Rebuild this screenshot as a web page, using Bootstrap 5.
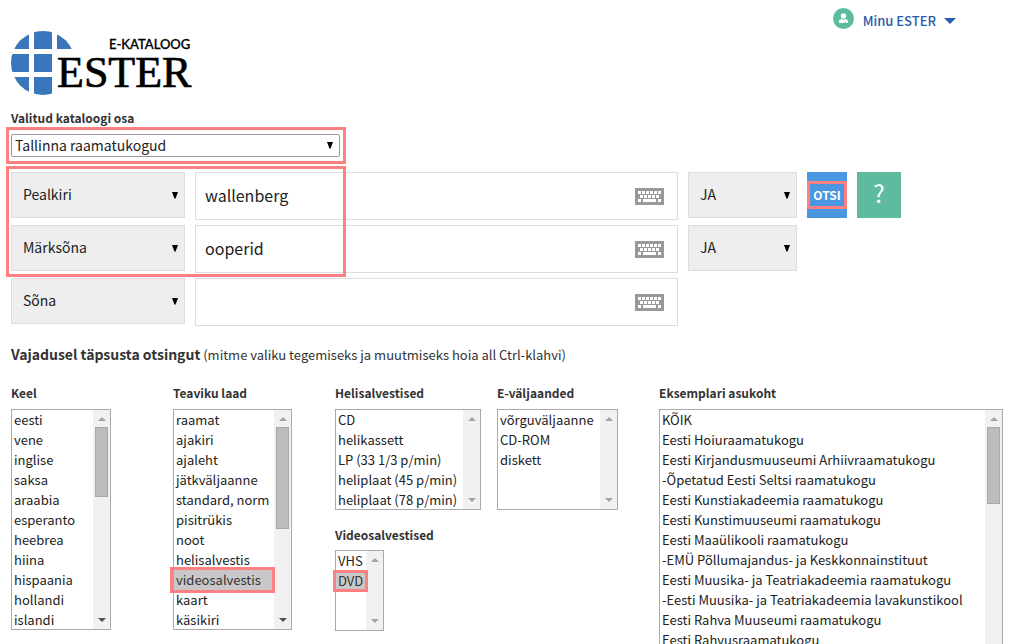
<!DOCTYPE html>
<html lang="et">
<head>
<meta charset="utf-8">
<meta name="viewport" content="width=device-width, initial-scale=1">
<title>E-kataloog ESTER</title>
<link href="https://cdn.jsdelivr.net/npm/bootstrap@5.3.0/dist/css/bootstrap.min.css" rel="stylesheet">
<style>
  body { font-family: "Noto Sans CJK SC", "Open Sans", sans-serif; font-size: 13px; line-height: 20px; color: #333; background: #fff; }
  .page { padding: 0 8px 0 11px; }
  .topbar { height: 31px; padding: 8px 47px 0 0; gap: 9px; }
  .topbar a { color: #2a5caa; font-weight: 500; line-height: 26px; gap: 8px; height: 26px; }
  .field-label { display: block; font-size: 12px; font-weight: 700; line-height: 20px; margin-bottom: 6px; white-space: nowrap; }
  .label-second { margin: 15px 0 5px; }
  .logo { margin-bottom: 12px; }
  .catalog { width: 329px; }
  .drop { appearance: none; border: 1px solid #ddd; border-radius: 0; color: #222; font-size: 14px; line-height: 20px;
    background: #eee url("data:image/svg+xml,%3Csvg xmlns='http://www.w3.org/2000/svg' width='6' height='7'%3E%3Cpath d='M0 0h6L3.600 6.500H2.400z'/%3E%3C/svg%3E") no-repeat right 6px center; }
  .drop-tall { height: 46px; width: 100%; padding: 0 20px 2px 11px; }
  .drop-slim { height: 23px; width: 100%; padding: 0 20px 1px 3px; border-color: #999; border-radius: 2px; background-color: #fff; display: block; }
  .row-start { grid-column: 1; }
  .search { display: grid; grid-template-columns: 174px minmax(0, 1fr) 109px 40px 44px; gap: 5px 10px; margin: 15px 102px 19px 0; align-items: start; }
  .term { height: 48px; border: 1px solid #ddd; padding-right: 13px; grid-column: 2; }
  .term input { border: 0; outline: 0; background: none; font-size: 16px; line-height: 24px; color: #222; padding: 0 9px 2px; min-width: 0; }
  .go { grid-column: 4; height: 46px; background: #4a96e0; color: #fff; font-size: 12px; font-weight: 700; border: 0; }
  .help { height: 46px; background: #5ebba0; color: #fff; font-size: 24px; line-height: 42px; font-weight: 400; border: 0; }
  .mark-box { position: absolute; border: 3px solid #ff8080; pointer-events: none; }
  .mark-catalog { inset: -7px -6px -7px -5px; }
  .mark-terms { left: -5px; top: -6px; width: 340px; height: 111px; }
  .mark-go { inset: 9px 0; }
  .mark-video { left: -4px; top: 157px; width: 105px; height: 26px; }
  .mark-dvd { left: -3px; top: 19px; width: 35px; height: 22px; }
  .filters { display: grid; grid-template-columns: repeat(4, 162px) minmax(0, 1fr); margin-top: 18px; }
  .listbox { border: 1px solid #aaa; background: #fff; height: 101px; }
  .listbox select { border: 0; outline: 0; padding: 0; background: none; color: #222; font-size: 13px; min-width: 0; scrollbar-width: none; overflow: hidden; height: 100%; }
  .listbox select::-webkit-scrollbar { display: none; }
  .listbox option { padding: 0 2px; height: 20px; min-height: 20px; line-height: 20px; }
  .listbox option:checked { background: #c8c8c8 linear-gradient(#c8c8c8, #c8c8c8); color: #333; }
  .lead-in strong { font-size: 14px; line-height: 16px; }
  .rail { width: 17px; flex: none; background: #f1f1f1; padding: 7px 2px; color: #a3a3a3; }
  .rail svg { display: block; margin: 0 auto; }
  .thumb { border: 1px solid #a8a8a8; background: #bcbcbc; margin-top: 6px; width: 13px; }
  .rail .on { color: #505050; }
  .tall { height: 221px; }
  .w-lang { width: 100px; } .w-kind { width: 119px; } .w-audio { width: 146px; } .w-online { width: 121px; } .w-video { width: 49px; height: 81px; }
  .place { height: 301px; }
</style>
</head>
<body class="vh-100 overflow-hidden">
<svg width="0" height="0" class="position-absolute" aria-hidden="true">
  <symbol id="up" viewBox="0 0 8 4"><path d="M0 4h8L4 0z" fill="currentColor"/></symbol>
  <symbol id="down" viewBox="0 0 8 4"><path d="M0 0h8L4 4z" fill="currentColor"/></symbol>
  <symbol id="keys" viewBox="0 0 29 17">
    <path d="M0 0h29v17H0z" fill="#999"/>
    <path d="M3 3h3v3H3zM7 3h3v3H7zM11 3h3v3h-3zM15 3h3v3h-3zM19 3h3v3h-3zM23 3h3v3h-3zM5 7h3v3H5zM9 7h3v3H9zM13 7h3v3h-3zM17 7h3v3h-3zM21 7h3v3h-3zM3 11h3v3H3zM8 11h13v3H8zM23 11h3v3h-3z" fill="#fff"/>
  </symbol>
</svg>
<div class="page">
  <nav class="topbar d-flex justify-content-end">
    <svg width="21" height="21" viewBox="0 0 21 21" aria-hidden="true">
      <circle cx="10.500" cy="10.500" r="10.500" fill="#5ebba0"/>
      <circle cx="10.500" cy="8" r="2.700" fill="#fff"/>
      <path d="M6 15v-1.500q0-2 2.500-2.400 2 1.400 4 0 2.500.4 2.500 2.400V15h-2v-1h-1v1z" fill="#fff"/>
    </svg>
    <a href="#" class="d-flex align-items-center text-decoration-none">Minu ESTER
      <svg width="12" height="6" viewBox="0 0 12 6" aria-hidden="true"><path d="M0 0h12L6 6z" fill="currentColor"/></svg>
    </a>
  </nav>

  <svg class="logo d-block" width="182" height="65" viewBox="0 0 182 65" role="img" aria-label="E-kataloog ESTER">
    <clipPath id="disc"><circle cx="32" cy="32" r="32"/></clipPath>
    <g clip-path="url(#disc)" fill="#3a76bb">
      <path d="M0 0h18v18H0zM23 0h18v18H23zM46 0h18v18H46zM0 23h18v18H0zM23 23h18v18H23zM0 46h18v18H0zM23 46h18v18H23z"/>
    </g>
    <text x="98" y="18" font-family="Lato" font-size="13" font-weight="500" fill="#000" stroke="#000" stroke-width=".3">E-KATALOOG</text>
    <text x="46" y="56" font-family="Liberation Serif" font-size="44" fill="#000" stroke="#000" stroke-width=".7">ESTER</text>
  </svg>

  <form>
    <div class="catalog">
      <label class="field-label" for="osa">Valitud kataloogi osa</label>
      <div class="position-relative">
        <select id="osa" class="drop drop-slim"><option>Tallinna raamatukogud</option></select>
        <span class="mark-box mark-catalog"></span>
      </div>
    </div>

    <div class="search position-relative">
      <select class="drop drop-tall row-start" aria-label="Otsinguväli 1"><option>Pealkiri</option></select>
      <div class="term d-flex align-items-center">
        <input class="flex-grow-1" type="text" value="wallenberg" aria-label="Otsisõna 1">
        <svg width="29" height="17" aria-hidden="true"><use href="#keys"/></svg>
      </div>
      <select class="drop drop-tall" aria-label="Tehe 1"><option>JA</option></select>
      <button type="submit" class="go position-relative p-0">OTSI<span class="mark-box mark-go"></span></button>
      <button type="button" class="help p-0 pb-1">?</button>

      <select class="drop drop-tall row-start" aria-label="Otsinguväli 2"><option>Märksõna</option></select>
      <div class="term d-flex align-items-center">
        <input class="flex-grow-1" type="text" value="ooperid" aria-label="Otsisõna 2">
        <svg width="29" height="17" aria-hidden="true"><use href="#keys"/></svg>
      </div>
      <select class="drop drop-tall" aria-label="Tehe 2"><option>JA</option></select>

      <select class="drop drop-tall row-start" aria-label="Otsinguväli 3"><option>Sõna</option></select>
      <div class="term d-flex align-items-center">
        <input class="flex-grow-1" type="text" aria-label="Otsisõna 3">
        <svg width="29" height="17" aria-hidden="true"><use href="#keys"/></svg>
      </div>
      <span class="mark-box mark-terms"></span>
    </div>

    <p class="lead-in m-0"><strong>Vajadusel täpsusta otsingut</strong> (mitme valiku tegemiseks ja muutmiseks hoia all Ctrl-klahvi)</p>

    <div class="filters">
      <div>
        <label class="field-label" for="keel">Keel</label>
        <div class="listbox tall w-lang d-flex">
          <select id="keel" class="flex-grow-1" multiple size="11">
            <option>eesti</option><option>vene</option><option>inglise</option><option>saksa</option><option>araabia</option><option>esperanto</option><option>heebrea</option><option>hiina</option><option>hispaania</option><option>hollandi</option><option>islandi</option>
          </select>
          <div class="rail d-flex flex-column"><svg width="8" height="4"><use href="#up"/></svg><div class="thumb" style="height:70px"></div><svg class="on mt-auto mb-0" width="8" height="4"><use href="#down"/></svg></div>
        </div>
      </div>
      <div>
        <label class="field-label" for="laad">Teaviku laad</label>
        <div class="listbox tall w-kind d-flex position-relative">
          <select id="laad" class="flex-grow-1" multiple size="11">
            <option>raamat</option><option>ajakiri</option><option>ajaleht</option><option>jätkväljaanne</option><option>standard, norm</option><option>pisitrükis</option><option>noot</option><option>helisalvestis</option><option selected>videosalvestis</option><option>kaart</option><option>käsikiri</option>
          </select>
          <div class="rail d-flex flex-column"><svg width="8" height="4"><use href="#up"/></svg><div class="thumb" style="height:102px"></div><svg class="on mt-auto mb-0" width="8" height="4"><use href="#down"/></svg></div>
          <span class="mark-box mark-video"></span>
        </div>
      </div>
      <div>
        <label class="field-label" for="heli">Helisalvestised</label>
        <div class="listbox w-audio d-flex">
          <select id="heli" class="flex-grow-1" multiple size="5">
            <option>CD</option><option>helikassett</option><option>LP (33 1/3 p/min)</option><option>heliplaat (45 p/min)</option><option>heliplaat (78 p/min)</option>
          </select>
          <div class="rail d-flex flex-column justify-content-between"><svg width="8" height="4"><use href="#up"/></svg><svg width="8" height="4"><use href="#down"/></svg></div>
        </div>
        <label class="field-label label-second" for="video">Videosalvestised</label>
        <div class="listbox w-video d-flex position-relative">
          <select id="video" class="flex-grow-1" multiple size="4">
            <option>VHS</option><option selected>DVD</option>
          </select>
          <div class="rail d-flex flex-column justify-content-between"><svg width="8" height="4"><use href="#up"/></svg><svg width="8" height="4"><use href="#down"/></svg></div>
          <span class="mark-box mark-dvd"></span>
        </div>
      </div>
      <div>
        <label class="field-label" for="evalja">E-väljaanded</label>
        <div class="listbox w-online d-flex">
          <select id="evalja" class="flex-grow-1" multiple size="5">
            <option>võrguväljaanne</option><option>CD-ROM</option><option>diskett</option>
          </select>
          <div class="rail d-flex flex-column justify-content-between"><svg width="8" height="4"><use href="#up"/></svg><svg width="8" height="4"><use href="#down"/></svg></div>
        </div>
      </div>
      <div>
        <label class="field-label" for="asukoht">Eksemplari asukoht</label>
        <div class="listbox place d-flex">
          <select id="asukoht" class="flex-grow-1" multiple size="15">
            <option>KÕIK</option><option>Eesti Hoiuraamatukogu</option><option>Eesti Kirjandusmuuseumi Arhiivraamatukogu</option><option>-Õpetatud Eesti Seltsi raamatukogu</option><option>Eesti Kunstiakadeemia raamatukogu</option><option>Eesti Kunstimuuseumi raamatukogu</option><option>Eesti Maaülikooli raamatukogu</option><option>-EMÜ Põllumajandus- ja Keskkonnainstituut</option><option>Eesti Muusika- ja Teatriakadeemia raamatukogu</option><option>-Eesti Muusika- ja Teatriakadeemia lavakunstikool</option><option>Eesti Rahva Muuseumi raamatukogu</option><option>Eesti Rahvusraamatukogu</option>
          </select>
          <div class="rail d-flex flex-column"><svg width="8" height="4"><use href="#up"/></svg><div class="thumb" style="height:77px"></div><svg class="on mt-auto mb-0" width="8" height="4"><use href="#down"/></svg></div>
        </div>
      </div>
    </div>
  </form>
</div>
<script src="https://cdn.jsdelivr.net/npm/bootstrap@5.3.0/dist/js/bootstrap.bundle.min.js"></script>
</body>
</html>
